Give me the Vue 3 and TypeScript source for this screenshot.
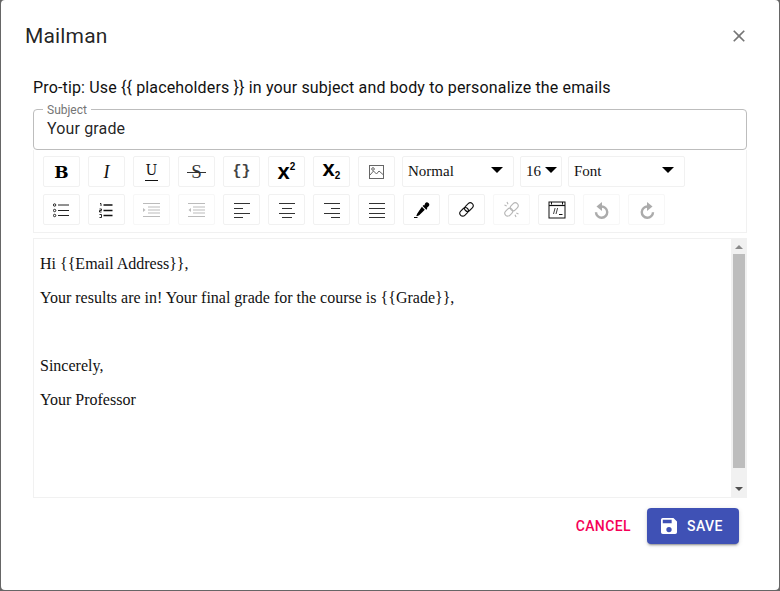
<template>
  <div class="overlay">
    <div class="dialog">
      <header class="dialog-head">
        <h2 class="dialog-title">Mailman</h2>
        <button class="close-btn" aria-label="close">
          <svg width="20" height="20" viewBox="0 0 24 24"><path fill="#757575" d="M19 6.41 17.59 5 12 10.59 6.41 5 5 6.41 10.59 12 5 17.59 6.41 19 12 13.41 17.59 19 19 17.59 13.41 12z" /></svg>
        </button>
      </header>

      <div class="dialog-body">
        <p class="tip">Pro-tip: Use {{ tipText }} in your subject and body to personalize the emails</p>

        <div class="subject">
          <span class="subject-label">Subject</span>
          <div class="subject-value">Your grade</div>
        </div>

        <div class="toolbar">
          <div class="tb-row">
            <button class="tb-btn"><span class="glyph bold">B</span></button>
            <button class="tb-btn"><span class="glyph italic">I</span></button>
            <button class="tb-btn"><span class="glyph under">U</span></button>
            <button class="tb-btn"><span class="glyph strike">S</span></button>
            <button class="tb-btn"><span class="glyph mono">{}</span></button>
            <button class="tb-btn"><span class="glyph script">x<sup>2</sup></span></button>
            <button class="tb-btn"><span class="glyph script low">x<sub>2</sub></span></button>
            <button class="tb-btn tb-btn-last">
              <svg width="17" height="16" viewBox="0 0 17 16" fill="none" stroke="#666"><rect x="1.5" y="1.5" width="14" height="13" /><path d="M2 11l3.5-4 3 3 2.5-3 4 3.5" /><circle cx="5" cy="5" r="1.3" /></svg>
            </button>
            <div class="tb-select w-normal">Normal<i class="caret" /></div>
            <div class="tb-select w-size">16<i class="caret" /></div>
            <div class="tb-select w-font">Font<i class="caret" /></div>
          </div>

          <div class="tb-row">
            <button class="tb-btn">
              <svg width="17" height="16" viewBox="0 0 17 16" fill="none" stroke="#222"><circle cx="1.6" cy="3" r="1.2" /><circle cx="1.6" cy="8.5" r="1.2" /><circle cx="1.6" cy="13.5" r="1.2" /><path d="M5 3h11M5 8.5h11M5 13.5h11" /></svg>
            </button>
            <button class="tb-btn">
              <svg width="17" height="16" viewBox="0 0 17 16" fill="none" stroke="#111"><path d="M2 1.5h1v2.5M1.5 7h2v1.5h-2V10h2M1.5 12.5h2v3h-2" stroke-width=".9" /><path d="M5.5 3h9M5.5 8.5h9M5.5 13.5h9" stroke-width="1.6" /></svg>
            </button>
            <button class="tb-btn off">
              <svg width="19" height="16" viewBox="0 0 19 16" fill="none" stroke="#222"><path d="M1 1.5h17M6 5h12M6 8h12M6 11h12M1 14.5h17" /><path d="M1 6l2.5 2L1 10z" fill="#222" stroke="none" /></svg>
            </button>
            <button class="tb-btn off">
              <svg width="19" height="16" viewBox="0 0 19 16" fill="none" stroke="#222"><path d="M1 1.5h17M6 5h12M6 8h12M6 11h12M1 14.5h17" /><path d="M4 6L1.5 8 4 10z" fill="#222" stroke="none" /></svg>
            </button>
            <button class="tb-btn">
              <svg width="16" height="16" viewBox="0 0 16 16" fill="none" stroke="#333"><path d="M0 1.5h16M0 6.5h9M0 11.5h16M0 15.5h9" /></svg>
            </button>
            <button class="tb-btn">
              <svg width="16" height="16" viewBox="0 0 16 16" fill="none" stroke="#333"><path d="M0 1.5h16M3 6.5h10M0 11.5h16M3 15.5h10" /></svg>
            </button>
            <button class="tb-btn">
              <svg width="16" height="16" viewBox="0 0 16 16" fill="none" stroke="#333"><path d="M0 1.5h16M7 6.5h9M0 11.5h16M7 15.5h9" /></svg>
            </button>
            <button class="tb-btn">
              <svg width="16" height="16" viewBox="0 0 16 16" fill="none" stroke="#333"><path d="M0 1.5h16M0 6.5h16M0 11.5h16M0 15.5h16" /></svg>
            </button>
            <button class="tb-btn">
              <svg width="16" height="16" viewBox="0 0 16 16"><path fill="#000" d="M11.2 1.2a2.2 2.2 0 0 1 3.4 3.1l-1.8 1.8.5.7-1 1-3.7-3.7 1-1 .7.5zM7.9 4.8l2.9 2.9-5.6 5.6-2.3 1-.6-.6 1-2.3z" /><path stroke="#000" d="M0 15.5h3.5" /></svg>
            </button>
            <button class="tb-btn">
              <svg width="17" height="17" viewBox="0 0 17 17" fill="none" stroke="#111" stroke-width="1.1"><g transform="rotate(-45 8.5 8.5)"><rect x="0.3" y="5.6" width="9.6" height="5.8" rx="2.9" /><rect x="7.1" y="5.6" width="9.6" height="5.8" rx="2.9" /></g></svg>
            </button>
            <button class="tb-btn off">
              <svg width="17" height="17" viewBox="0 0 17 17" fill="none" stroke="#111" stroke-width="1.1"><g transform="rotate(-45 8.5 8.5)"><rect x="0.3" y="5.6" width="8.6" height="5.8" rx="2.9" /><rect x="8.1" y="5.6" width="8.6" height="5.8" rx="2.9" /></g><path d="M4 1l1 2.2M1.5 4l2.2 1M13 16l-1-2.2M15.5 13l-2.2-1" /></svg>
            </button>
            <button class="tb-btn">
              <svg width="18" height="18" viewBox="0 0 18 18" fill="none" stroke="#111"><rect x="1" y="1" width="16" height="16" /><path d="M1 4.5h16" stroke-width="1.2" /><path d="M3.5 1v2.5M14.5 1v2.5" /><path d="M5.5 13l1.6-6M8 13l1.6-6" stroke-width=".8" /><path d="M11 13.5h3.5" /></svg>
            </button>
            <button class="tb-btn off dim">
              <svg width="16" height="18" viewBox="0 0 16 18" fill="none"><path stroke="#111" stroke-width="2.4" d="M7 5.6A5.6 5.6 0 1 1 2 11.2" /><path fill="#111" d="M8 1v9L2.5 5.5z" /></svg>
            </button>
            <button class="tb-btn off dim">
              <svg width="16" height="18" viewBox="0 0 16 18" fill="none"><path stroke="#111" stroke-width="2.4" d="M9 5.6A5.6 5.6 0 1 0 14 11.2" /><path fill="#111" d="M8 1v9l5.5-4.5z" /></svg>
            </button>
          </div>
        </div>

        <div class="editor">
          <div class="editor-text">
            <p v-for="(line, i) in lines" :key="i">{{ line || '\u00a0' }}</p>
          </div>
          <div class="scrollbar">
            <i class="arrow up" />
            <div class="thumb" />
            <i class="arrow down" />
          </div>
        </div>
      </div>

      <footer class="actions">
        <button class="btn-cancel">Cancel</button>
        <button class="btn-save">
          <svg width="16" height="16" viewBox="3 3 18 18"><path fill="#fff" d="M17 3H5a2 2 0 0 0-2 2v14a2 2 0 0 0 2 2h14a2 2 0 0 0 2-2V7l-4-4zm-5 16a3 3 0 1 1 0-6 3 3 0 0 1 0 6zm3-10H5V5h10v4z" /></svg>
          Save
        </button>
      </footer>
    </div>
  </div>
</template>

<script setup lang="ts">
const tipText = '{{ placeholders }}'

const lines: string[] = [
  'Hi {{Email Address}},',
  'Your results are in! Your final grade for the course is {{Grade}},',
  '',
  'Sincerely,',
  'Your Professor',
]
</script>

<style>
html,
body {
  margin: 0;
  background: #666;
}
</style>

<style scoped>
.overlay {
  width: 780px;
  height: 591px;
  box-sizing: border-box;
  padding: 0 1px 1px;
  background: #666;
  overflow: hidden;
}

.dialog {
  height: 590px;
  background: #fff;
  border-radius: 4px;
  font-family: Roboto, sans-serif;
  color: rgba(0, 0, 0, 0.87);
}

.dialog-head {
  display: flex;
  align-items: center;
  justify-content: space-between;
  height: 72px;
  padding: 0 30px 0 24px;
}

.dialog-title {
  margin: 0;
  font-size: 21px;
  font-weight: 400;
  letter-spacing: 0.15px;
  line-height: 28px;
}

.close-btn {
  display: flex;
  padding: 0;
  border: 0;
  background: none;
}

.dialog-body {
  padding: 0 32px;
}

.tip {
  margin: 0;
  height: 37px;
  font-size: 16px;
  letter-spacing: 0.15px;
  line-height: 32px;
  color: #111;
}

.subject {
  position: relative;
  box-sizing: border-box;
  height: 41px;
  border: 1px solid #bdbdbd;
  border-radius: 4px;
  padding: 9px 13px;
}

.subject-label {
  position: absolute;
  top: -7px;
  left: 9px;
  padding: 0 4px;
  background: #fff;
  font-size: 12px;
  line-height: 14px;
  color: #757575;
}

.subject-value {
  font-size: 16px;
  letter-spacing: 0.15px;
  line-height: 20px;
}

.toolbar {
  box-sizing: border-box;
  height: 83px;
  padding: 6px 9px 0;
  border: 1px solid #f1f1f1;
  border-top: 0;
}

.tb-row {
  display: flex;
  margin-bottom: 7px;
}

.tb-btn {
  display: flex;
  align-items: center;
  justify-content: center;
  box-sizing: border-box;
  width: 37px;
  height: 31px;
  margin-right: 8px;
  padding: 0;
  border: 1px solid #f1f1f1;
  border-radius: 2px;
  background: #fff;
  color: #000;
}

.tb-btn-last {
  margin-right: 7px;
}

.tb-btn.off {
  border-color: #f7f7f7;
}

.tb-btn.off > svg {
  opacity: 0.3;
}

.tb-btn.dim > svg {
  opacity: 0.35;
}

.glyph {
  font-family: 'Liberation Serif', serif;
  font-size: 18px;
  line-height: 20px;
  color: #111;
}

.bold {
  font-family: 'DejaVu Serif', serif;
  font-weight: 700;
  font-size: 17px;
  color: #000;
}

.italic {
  font-style: italic;
}

.under {
  padding: 0 1px 2px;
  border-bottom: 1px solid #111;
  font-family: 'DejaVu Serif', serif;
  font-size: 14px;
  line-height: 15px;
}

.strike {
  position: relative;
  font-size: 19px;
  color: #333;
}

/* line runs wider than the letter */
.strike::after {
  content: '';
  position: absolute;
  top: 10px;
  left: -4px;
  right: -4px;
  border-top: 1px solid #333;
}

.mono {
  font-family: 'Liberation Mono', monospace;
  font-size: 15px;
  font-weight: 700;
  color: #444;
}

.script {
  font-family: 'Liberation Sans', sans-serif;
  font-size: 22px;
  font-weight: 700;
  color: #000;
}

.script.low {
  margin-bottom: 5px;
}

.script sup,
.script sub {
  font-size: 10px;
  line-height: 0;
}

.script sup {
  vertical-align: 9px;
}

.script sub {
  vertical-align: -3px;
}

.tb-select {
  position: relative;
  box-sizing: border-box;
  height: 31px;
  margin-right: 6px;
  padding-left: 5px;
  border: 1px solid #f1f1f1;
  border-radius: 2px;
  font-family: 'Liberation Serif', serif;
  font-size: 15px;
  line-height: 29px;
  color: #111;
}

.w-normal {
  width: 112px;
}

.w-size {
  width: 42px;
}

.w-font {
  width: 117px;
}

.caret {
  position: absolute;
  top: 10px;
  right: 10px;
  width: 0;
  height: 0;
  border-top: 6px solid #000;
  border-left: 6px solid transparent;
  border-right: 6px solid transparent;
}

.w-size .caret {
  right: 4px;
}

.editor {
  display: flex;
  box-sizing: border-box;
  height: 260px;
  margin-top: 5px;
  border: 1px solid #f1f1f1;
}

.editor-text {
  flex: 1;
  padding: 16px 6px 0;
  font-family: 'Liberation Serif', serif;
  font-size: 16px;
  line-height: 18px;
  color: #111;
}

.editor-text p {
  margin: 0 0 16px;
}

.scrollbar {
  display: flex;
  flex-direction: column;
  align-items: center;
  width: 15px;
  background: #f1f1f1;
}

.thumb {
  width: 12px;
  height: 214px;
  margin: 5px 0 0;
  background: #bdbdbd;
}

.arrow {
  width: 0;
  height: 0;
  border-left: 4px solid transparent;
  border-right: 4px solid transparent;
}

.arrow.up {
  margin-top: 6px;
  border-bottom: 4px solid #8a8a8a;
}

.arrow.down {
  margin-top: 19px;
  border-top: 4px solid #505050;
}

.actions {
  display: flex;
  align-items: center;
  justify-content: flex-end;
  gap: 8px;
  padding: 10px 40px 0 0;
}

.btn-cancel,
.btn-save {
  height: 36px;
  border: 0;
  border-radius: 4px;
  font-family: Roboto, sans-serif;
  font-size: 14px;
  font-weight: 500;
  letter-spacing: 0.4px;
  text-transform: uppercase;
}

.btn-cancel {
  padding: 0 8px;
  background: none;
  color: #f50057;
}

.btn-save {
  display: flex;
  align-items: center;
  gap: 10px;
  box-sizing: border-box;
  width: 92px;
  padding: 0 0 0 14px;
  background: #3f51b5;
  color: #fff;
  box-shadow: 0 3px 1px -2px rgba(0, 0, 0, 0.2), 0 2px 2px 0 rgba(0, 0, 0, 0.14), 0 1px 5px 0 rgba(0, 0, 0, 0.12);
}
</style>
